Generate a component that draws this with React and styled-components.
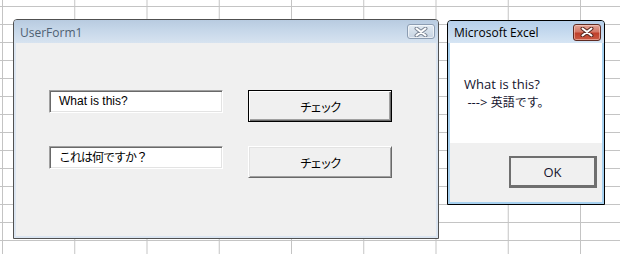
import React from "react";
import styled, { createGlobalStyle } from "styled-components";

const GlobalStyle = createGlobalStyle`
  html, body {
    margin: 0;
    padding: 0;
    background: #ffffff;
  }
`;

const Sheet = styled.div`
  position: relative;
  width: 620px;
  height: 254px;
  overflow: hidden;
  background-color: #ffffff;
  background-image: linear-gradient(to right, #c4c4c4 1px, transparent 1px),
    linear-gradient(to bottom, #c4c4c4 1px, transparent 1px);
  background-size: 72.25px 18px;
  background-position: 2px 6px;
`;

const Window = styled.div`
  position: absolute;
  left: ${(props) => props.x}px;
  top: ${(props) => props.y}px;
  width: ${(props) => props.w}px;
  height: ${(props) => props.h}px;
  box-sizing: border-box;
  display: flex;
  flex-direction: column;
  border: 1px solid ${(props) => (props.active ? "#000000" : "#505050")};
  border-radius: 4px 4px 0 0;
  background: ${(props) => (props.active ? "#a6d0ef" : "#dbe5f1")};
  padding: 0 2px 2px;
  font-family: "Open Sans", "Noto Sans", "Noto Sans CJK JP", sans-serif;
`;

const TitleBar = styled.div`
  flex: 0 0 ${(props) => props.height}px;
  margin: 0 -2px;
  padding: 0 3px 0 6px;
  display: flex;
  align-items: center;
  justify-content: space-between;
  border-radius: 3px 3px 0 0;
  background: ${(props) =>
    props.active
      ? "linear-gradient(to bottom, #b6cfea 0%, #c3d8ee 45%, #d6e5f4 100%)"
      : "linear-gradient(to bottom, #b8cbe0 0%, #c6d7e9 45%, #d7e3f0 100%)"};
`;

const Title = styled.span`
  font-size: 12px;
  color: ${(props) => (props.active ? "#000000" : "#4f6072")};
  padding-top: 1px;
`;

const CloseButton = styled.div`
  width: 28px;
  height: ${(props) => props.height}px;
  box-sizing: border-box;
  border-radius: 3px;
  display: flex;
  align-items: center;
  justify-content: center;
  border: 1px solid ${(props) => (props.active ? "#5f2b22" : "#8c9db2")};
  background: ${(props) =>
    props.active
      ? "linear-gradient(to bottom, #e2a497 0%, #d47766 45%, #c0402b 55%, #c95a44 100%)"
      : "linear-gradient(to bottom, #e3ebf3 0%, #d4dfea 50%, #c7d4e2 100%)"};
  box-shadow: inset 0 0 0 1px
    ${(props) => (props.active ? "rgba(255,220,210,0.5)" : "rgba(255,255,255,0.6)")};
`;

const CloseGlyph = ({ active }) => (
  <svg width="14" height="10" viewBox="0 0 14 10">
    <path
      d="M2.5 1.5 L11.5 8.5 M11.5 1.5 L2.5 8.5"
      stroke={active ? "#5a2a22" : "#7d8796"}
      strokeWidth="4"
      strokeLinecap="round"
      fill="none"
    />
    <path
      d="M2.5 1.5 L11.5 8.5 M11.5 1.5 L2.5 8.5"
      stroke="#ffffff"
      strokeWidth="2"
      strokeLinecap="round"
      fill="none"
    />
  </svg>
);

const FormClient = styled.div`
  flex: 1;
  background: #f0f0f0;
  padding: 47px 0 0 33px;
  display: flex;
  flex-direction: column;
  gap: 24px;
`;

const FormRow = styled.div`
  display: flex;
  align-items: flex-start;
  gap: 25px;
`;

const TextBox = styled.div`
  width: 174px;
  height: 23px;
  box-sizing: border-box;
  background: #ffffff;
  border-top: 1px solid #a0a0a0;
  border-left: 1px solid #a0a0a0;
  border-bottom: 1px solid #ffffff;
  border-right: 1px solid #ffffff;
  box-shadow: inset 1px 1px #696969, inset -1px -1px #e3e3e3;
  padding: 0 0 2px 9px;
  display: flex;
  align-items: center;
  font-family: "Liberation Sans", "Noto Sans CJK JP", sans-serif;
  font-size: 12px;
  color: #000000;
  letter-spacing: ${(props) => (props.cjk ? "-1px" : "0")};
`;

const FormButton = styled.div`
  width: 144px;
  height: 32px;
  box-sizing: border-box;
  display: flex;
  align-items: center;
  justify-content: center;
  background: #f0f0f0;
  border: 1px solid ${(props) => (props.focused ? "#000000" : "#ffffff")};
  ${(props) =>
    props.focused
      ? "box-shadow: inset 1px 1px #ffffff, inset -1px -1px #696969, inset -2px -2px #a0a0a0;"
      : "border-right-color: #696969; border-bottom-color: #696969; box-shadow: inset 1px 1px #e3e3e3, inset -1px -1px #a0a0a0;"}
  font-family: "Liberation Sans", "Noto Sans CJK JP", sans-serif;
  font-size: 12px;
  letter-spacing: -2px;
  color: #000000;
`;

const MessageArea = styled.div`
  flex: 0 0 100px;
  background: #ffffff;
  padding: 33px 0 0 14px;
  box-sizing: border-box;
  font-size: 13px;
  color: #14142e;
`;

const MessageLine = styled.div`
  height: 17px;
  line-height: 17px;
  white-space: pre;
`;

const Kana = styled.span`
  font-family: "Noto Sans CJK JP", sans-serif;
  font-size: 12px;
  line-height: 17px;
`;

const ButtonArea = styled.div`
  flex: 1;
  background: #f0f0f0;
  display: flex;
  justify-content: flex-end;
  align-items: flex-start;
  padding: 13px 5px 0 0;
`;

const OkButton = styled.div`
  width: 88px;
  height: 32px;
  box-sizing: border-box;
  display: flex;
  align-items: center;
  justify-content: center;
  background: #f0f0f0;
  border: 2px solid #6f6f6f;
  border-right-width: 3px;
  border-bottom-width: 3px;
  font-size: 13px;
  color: #14142e;
`;

const rows = [
  { text: "What is this?", cjk: false, focused: true },
  { text: "これは何ですか？", cjk: true, focused: false },
];

export default function App() {
  return (
    <>
      <GlobalStyle />
      <Sheet>
        <Window x={13} y={19} w={426} h={220}>
          <TitleBar height={23}>
            <Title>UserForm1</Title>
            <CloseButton height={15}>
              <CloseGlyph />
            </CloseButton>
          </TitleBar>
          <FormClient>
            {rows.map((row) => (
              <FormRow key={row.text}>
                <TextBox cjk={row.cjk}>{row.text}</TextBox>
                <FormButton focused={row.focused}>チェック</FormButton>
              </FormRow>
            ))}
          </FormClient>
        </Window>

        <Window active x={447} y={20} w={158} h={185}>
          <TitleBar active height={22}>
            <Title active>Microsoft Excel</Title>
            <CloseButton active height={17}>
              <CloseGlyph active />
            </CloseButton>
          </TitleBar>
          <MessageArea>
            <MessageLine>What is this?</MessageLine>
            <MessageLine>
              {" ---> "}
              <Kana>英語です。</Kana>
            </MessageLine>
          </MessageArea>
          <ButtonArea>
            <OkButton>OK</OkButton>
          </ButtonArea>
        </Window>
      </Sheet>
    </>
  );
}
